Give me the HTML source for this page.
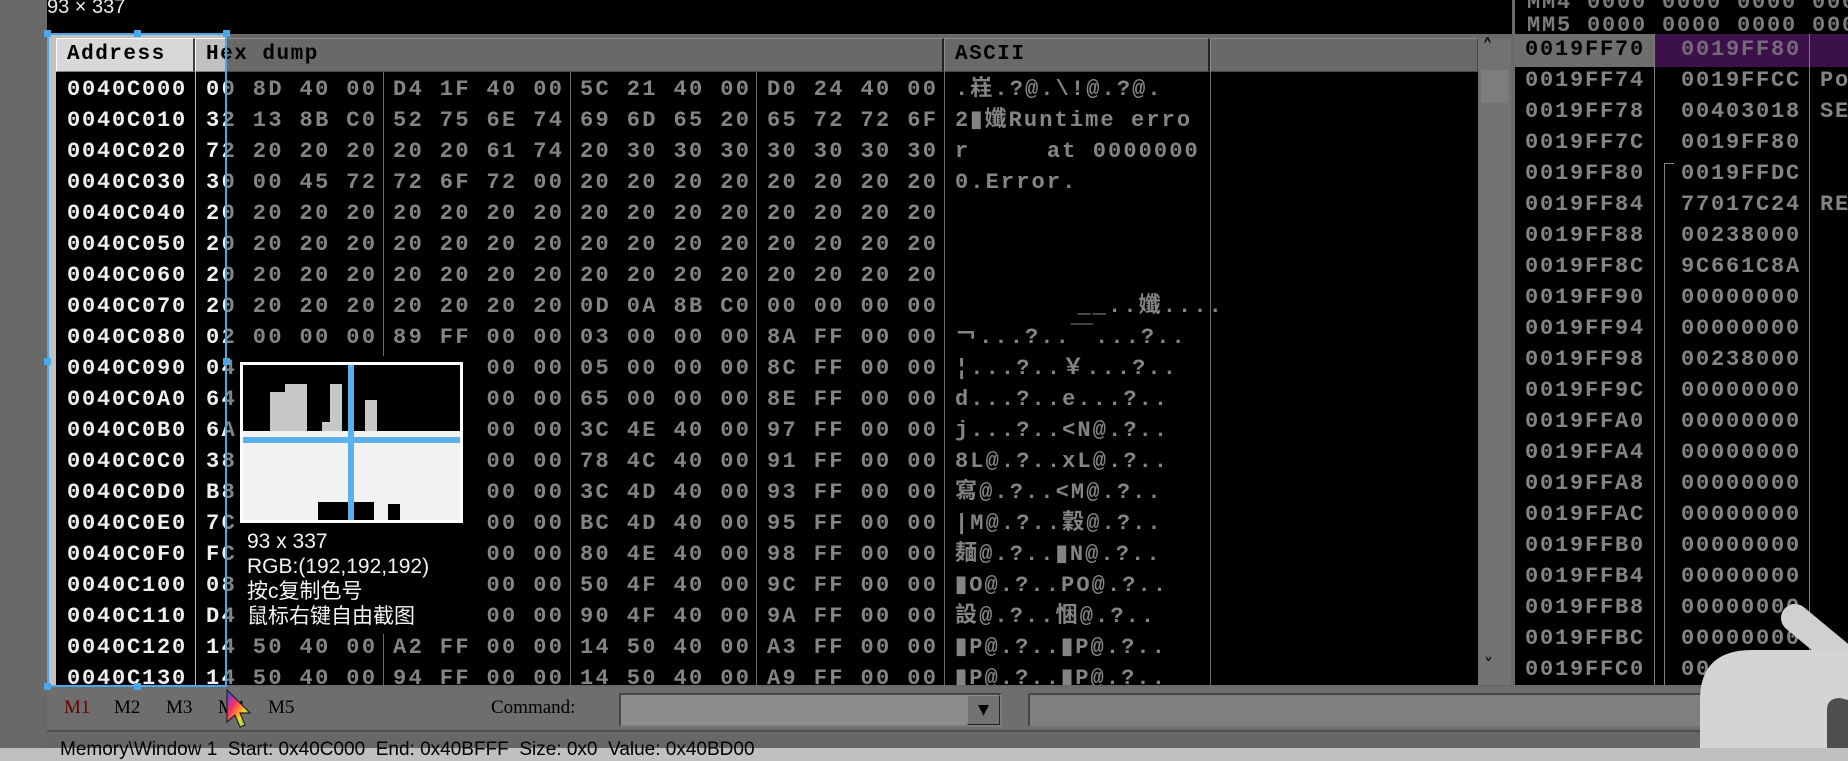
<!DOCTYPE html>
<html><head><meta charset="utf-8"><style>
*{margin:0;padding:0;box-sizing:border-box}
body{width:1848px;height:748px;overflow:hidden;position:relative;background:#c0c0c0;font-family:"Liberation Mono",monospace}
.a{position:absolute}
.t{position:absolute;font:bold 22px "Liberation Mono","Noto Sans CJK SC",monospace;line-height:31px;white-space:pre;color:#f0f0f0}
.ad{left:67px;letter-spacing:1.8px}
.hx{left:206px;letter-spacing:2.38px}
.as{left:955px;letter-spacing:2.1px}
.sa{left:1525px;letter-spacing:1.8px}
.sv{left:1681px;letter-spacing:1.8px}
.sc{left:1820px;letter-spacing:1.8px}
.vl{position:absolute;width:1px;background:#c0c0c0}
.hd{position:absolute;top:38px;height:34px;background:#c0c0c0;border-top:1px solid #fff;border-left:1px solid #fff;border-right:2px solid #404040;border-bottom:1px solid #808080;font:bold 21px "Liberation Mono",monospace;line-height:32px;color:#000;padding-left:10px;letter-spacing:1.5px}
.dim{position:absolute;background:rgba(0,0,0,0.45)}
.mb{position:absolute;top:697px;font:19px "Liberation Serif",serif;color:#000}
</style></head><body>
<div class="a" style="left:47px;top:0;width:1801px;height:34px;background:#000"></div>
<div class="a" style="left:1512px;top:0;width:3px;height:34px;background:#c0c0c0"></div>
<div class="t" style="left:1527px;top:-13px;color:#e0e0e0;letter-spacing:1.8px">MM4 0000 0000 0000 0000</div>
<div class="t" style="left:1527px;top:10px;color:#e0e0e0;letter-spacing:1.8px">MM5 0000 0000 0000 0000</div>

<div class="a" style="left:47px;top:34px;width:1465px;height:652px;background:#c0c0c0"></div>
<div class="a" style="left:56px;top:72px;width:1422px;height:613px;background:#000"></div>
<div class="hd" style="left:56px;width:139px;background:#d8d8d8">Address</div>
<div class="hd" style="left:195px;width:749px">Hex dump</div>
<div class="hd" style="left:944px;width:266px">ASCII</div>
<div class="hd" style="left:1210px;width:268px;border-right:1px solid #808080"></div>
<div class="vl" style="left:195px;top:72px;height:613px"></div>
<div class="vl" style="left:383px;top:72px;height:613px"></div>
<div class="vl" style="left:570px;top:72px;height:613px"></div>
<div class="vl" style="left:756px;top:72px;height:613px"></div>
<div class="vl" style="left:944px;top:72px;height:613px"></div>
<div class="vl" style="left:1210px;top:72px;height:613px"></div>
<div class="a" style="left:1478px;top:38px;width:33px;height:647px;background:#d0d0d0"></div>
<div class="a" style="left:1481px;top:70px;width:27px;height:33px;background:#e4e4e4"></div>
<div class="a" style="left:1482px;top:36px;font:bold 22px 'DejaVu Sans',sans-serif;color:#222">&#x2c4;</div>
<div class="a" style="left:1484px;top:655px;font:bold 18px 'DejaVu Sans',sans-serif;color:#222">&#x2c5;</div>

<div style="position:absolute;left:0;top:74px">
<div class="t ad" style="top:0">0040C000</div><div class="t hx" style="top:0">00 8D 40 00 D4 1F 40 00 5C 21 40 00 D0 24 40 00</div><div class="t as" style="top:0">.嵀.?@.\!@.?@.</div>
<div class="t ad" style="top:31px">0040C010</div><div class="t hx" style="top:31px">32 13 8B C0 52 75 6E 74 69 6D 65 20 65 72 72 6F</div><div class="t as" style="top:31px">2▮孅Runtime erro</div>
<div class="t ad" style="top:62px">0040C020</div><div class="t hx" style="top:62px">72 20 20 20 20 20 61 74 20 30 30 30 30 30 30 30</div><div class="t as" style="top:62px">r     at 0000000</div>
<div class="t ad" style="top:93px">0040C030</div><div class="t hx" style="top:93px">30 00 45 72 72 6F 72 00 20 20 20 20 20 20 20 20</div><div class="t as" style="top:93px">0.Error.</div>
<div class="t ad" style="top:124px">0040C040</div><div class="t hx" style="top:124px">20 20 20 20 20 20 20 20 20 20 20 20 20 20 20 20</div>
<div class="t ad" style="top:155px">0040C050</div><div class="t hx" style="top:155px">20 20 20 20 20 20 20 20 20 20 20 20 20 20 20 20</div>
<div class="t ad" style="top:186px">0040C060</div><div class="t hx" style="top:186px">20 20 20 20 20 20 20 20 20 20 20 20 20 20 20 20</div>
<div class="t ad" style="top:217px">0040C070</div><div class="t hx" style="top:217px">20 20 20 20 20 20 20 20 0D 0A 8B C0 00 00 00 00</div><div class="t as" style="top:217px">        __..孅....</div>
<div class="t ad" style="top:248px">0040C080</div><div class="t hx" style="top:248px">02 00 00 00 89 FF 00 00 03 00 00 00 8A FF 00 00</div><div class="t as" style="top:248px">￢...?..￣...?..</div>
<div class="t ad" style="top:279px">0040C090</div><div class="t hx" style="top:279px">04 00 00 00 8B FF 00 00 05 00 00 00 8C FF 00 00</div><div class="t as" style="top:279px">¦...?..￥...?..</div>
<div class="t ad" style="top:310px">0040C0A0</div><div class="t hx" style="top:310px">64 00 00 00 8D FF 00 00 65 00 00 00 8E FF 00 00</div><div class="t as" style="top:310px">d...?..e...?..</div>
<div class="t ad" style="top:341px">0040C0B0</div><div class="t hx" style="top:341px">6A 00 00 00 96 FF 00 00 3C 4E 40 00 97 FF 00 00</div><div class="t as" style="top:341px">j...?..&lt;N@.?..</div>
<div class="t ad" style="top:372px">0040C0C0</div><div class="t hx" style="top:372px">38 4C 40 00 90 FF 00 00 78 4C 40 00 91 FF 00 00</div><div class="t as" style="top:372px">8L@.?..xL@.?..</div>
<div class="t ad" style="top:403px">0040C0D0</div><div class="t hx" style="top:403px">B8 4C 40 00 92 FF 00 00 3C 4D 40 00 93 FF 00 00</div><div class="t as" style="top:403px">寫@.?..&lt;M@.?..</div>
<div class="t ad" style="top:434px">0040C0E0</div><div class="t hx" style="top:434px">7C 4D 40 00 94 FF 00 00 BC 4D 40 00 95 FF 00 00</div><div class="t as" style="top:434px">|M@.?..穀@.?..</div>
<div class="t ad" style="top:465px">0040C0F0</div><div class="t hx" style="top:465px">FC 4D 40 00 96 FF 00 00 80 4E 40 00 98 FF 00 00</div><div class="t as" style="top:465px">麺@.?..▮N@.?..</div>
<div class="t ad" style="top:496px">0040C100</div><div class="t hx" style="top:496px">08 4F 40 00 99 FF 00 00 50 4F 40 00 9C FF 00 00</div><div class="t as" style="top:496px">▮O@.?..PO@.?..</div>
<div class="t ad" style="top:527px">0040C110</div><div class="t hx" style="top:527px">D4 4F 40 00 9B FF 00 00 90 4F 40 00 9A FF 00 00</div><div class="t as" style="top:527px">設@.?..悃@.?..</div>
<div class="t ad" style="top:558px">0040C120</div><div class="t hx" style="top:558px">14 50 40 00 A2 FF 00 00 14 50 40 00 A3 FF 00 00</div><div class="t as" style="top:558px">▮P@.?..▮P@.?..</div>
<div class="t ad" style="top:589px">0040C130</div><div class="t hx" style="top:589px">14 50 40 00 94 FF 00 00 14 50 40 00 A9 FF 00 00</div><div class="t as" style="top:589px">▮P@.?..▮P@.?..</div>
</div>
<div class="a" style="left:47px;top:685px;width:1465px;height:3px;background:#c0c0c0"></div>

<div class="a" style="left:1512px;top:34px;width:336px;height:652px;background:#c0c0c0"></div>
<div class="a" style="left:1515px;top:34px;width:333px;height:651px;background:#000"></div>
<div class="a" style="left:1515px;top:34px;width:139px;height:33px;background:#c8c8c8"></div>
<div class="a" style="left:1655px;top:34px;width:193px;height:33px;background:#6e1e84"></div>
<div class="vl" style="left:1654px;top:34px;height:651px;background:#e0e0e0"></div>
<div class="vl" style="left:1809px;top:34px;height:651px;background:#e0e0e0"></div>
<div class="vl" style="left:1664px;top:163px;height:522px;background:#f0f0f0"></div>
<div class="a" style="left:1664px;top:163px;width:10px;height:1px;background:#f0f0f0"></div>
<div style="position:absolute;left:0;top:34px">
<div class="t sa" style="top:0;color:#000">0019FF70</div><div class="t sv" style="top:0;color:#d8c0e0">0019FF80</div>
<div class="t sa" style="top:31px">0019FF74</div><div class="t sv" style="top:31px">0019FFCC</div><div class="t sc" style="top:31px">Po</div>
<div class="t sa" style="top:62px">0019FF78</div><div class="t sv" style="top:62px">00403018</div><div class="t sc" style="top:62px">SE</div>
<div class="t sa" style="top:93px">0019FF7C</div><div class="t sv" style="top:93px">0019FF80</div>
<div class="t sa" style="top:124px">0019FF80</div><div class="t sv" style="top:124px">0019FFDC</div>
<div class="t sa" style="top:155px">0019FF84</div><div class="t sv" style="top:155px">77017C24</div><div class="t sc" style="top:155px">RE</div>
<div class="t sa" style="top:186px">0019FF88</div><div class="t sv" style="top:186px">00238000</div>
<div class="t sa" style="top:217px">0019FF8C</div><div class="t sv" style="top:217px">9C661C8A</div>
<div class="t sa" style="top:248px">0019FF90</div><div class="t sv" style="top:248px">00000000</div>
<div class="t sa" style="top:279px">0019FF94</div><div class="t sv" style="top:279px">00000000</div>
<div class="t sa" style="top:310px">0019FF98</div><div class="t sv" style="top:310px">00238000</div>
<div class="t sa" style="top:341px">0019FF9C</div><div class="t sv" style="top:341px">00000000</div>
<div class="t sa" style="top:372px">0019FFA0</div><div class="t sv" style="top:372px">00000000</div>
<div class="t sa" style="top:403px">0019FFA4</div><div class="t sv" style="top:403px">00000000</div>
<div class="t sa" style="top:434px">0019FFA8</div><div class="t sv" style="top:434px">00000000</div>
<div class="t sa" style="top:465px">0019FFAC</div><div class="t sv" style="top:465px">00000000</div>
<div class="t sa" style="top:496px">0019FFB0</div><div class="t sv" style="top:496px">00000000</div>
<div class="t sa" style="top:527px">0019FFB4</div><div class="t sv" style="top:527px">00000000</div>
<div class="t sa" style="top:558px">0019FFB8</div><div class="t sv" style="top:558px">00000000</div>
<div class="t sa" style="top:589px">0019FFBC</div><div class="t sv" style="top:589px">00000000</div>
<div class="t sa" style="top:620px">0019FFC0</div><div class="t sv" style="top:620px">00000000</div>
</div>
<div class="a" style="left:0;top:685px;width:1848px;height:2px;background:#c0c0c0"></div>

<div class="a" style="left:47px;top:687px;width:1801px;height:43px;background:#c8c8c8"></div>
<div class="mb" style="left:64px;color:#c00000">M1</div>
<div class="mb" style="left:114px">M2</div>
<div class="mb" style="left:166px">M3</div>
<div class="mb" style="left:218px">M4</div>
<div class="mb" style="left:268px">M5</div>
<div class="mb" style="left:491px">Command:</div>
<div class="a" style="left:619px;top:693px;width:383px;height:34px;background:#fff;border:2px solid #808080;border-right-color:#e0e0e0;border-bottom-color:#e0e0e0"></div>
<div class="a" style="left:967px;top:695px;width:33px;height:30px;background:#d0d0d0;border:1px solid #fff;border-right-color:#404040;border-bottom-color:#404040;font:14px 'DejaVu Sans',sans-serif;text-align:center;line-height:28px;color:#000">▼</div>
<div class="a" style="left:1028px;top:693px;width:820px;height:34px;background:#e8e8e8;border:2px solid #808080;border-right:none;border-bottom-color:#e0e0e0"></div>
<div class="a" style="left:47px;top:730px;width:1801px;height:18px;background:#bcbcbc;border-top:2px solid #909090"></div>
<div class="a" style="left:60px;top:739px;font:19px 'Liberation Sans',sans-serif;color:#000;white-space:pre">Memory\Window 1  Start: 0x40C000  End: 0x40BFFF  Size: 0x0  Value: 0x40BD00</div>

<div class="dim" style="left:0;top:0;width:1848px;height:33px"></div>
<div class="dim" style="left:0;top:33px;width:47px;height:715px"></div>
<div class="dim" style="left:226px;top:33px;width:1622px;height:715px"></div>
<div class="dim" style="left:47px;top:686px;width:179px;height:62px"></div>

<div class="a" style="left:47px;top:-4px;font:20px 'Liberation Sans',sans-serif;color:#e8e8e8">93 × 337</div>

<div class="a" style="left:47px;top:33px;width:180px;height:654px;border:2px solid #4aa8e8"></div>
<div class="a" style="left:44px;top:30px;width:7px;height:7px;background:#4aa8e8"></div>
<div class="a" style="left:134px;top:30px;width:7px;height:7px;background:#4aa8e8"></div>
<div class="a" style="left:223px;top:30px;width:7px;height:7px;background:#4aa8e8"></div>
<div class="a" style="left:44px;top:358px;width:7px;height:7px;background:#4aa8e8"></div>
<div class="a" style="left:223px;top:358px;width:7px;height:7px;background:#4aa8e8"></div>
<div class="a" style="left:44px;top:683px;width:7px;height:7px;background:#4aa8e8"></div>
<div class="a" style="left:134px;top:683px;width:7px;height:7px;background:#4aa8e8"></div>

<div class="a" style="left:236px;top:356px;width:240px;height:278px;background:#000"></div>
<svg class="a" style="left:240px;top:362px" width="223" height="161" viewBox="0 0 223 161">
<rect x="0" y="0" width="223" height="161" fill="#fff"/>
<rect x="3" y="3" width="217" height="66" fill="#000"/>
<rect x="3" y="69" width="217" height="89" fill="#f2f2f2"/>
<rect x="30" y="30" width="22" height="39" fill="#c8c8c8"/>
<rect x="45" y="22" width="22" height="47" fill="#c8c8c8"/>
<rect x="90" y="22" width="12" height="47" fill="#c8c8c8"/>
<rect x="82" y="60" width="12" height="9" fill="#c8c8c8"/>
<rect x="125" y="38" width="12" height="31" fill="#c8c8c8"/>
<rect x="3" y="75" width="217" height="6" fill="#5ab0e8"/>
<rect x="108" y="3" width="6" height="155" fill="#5ab0e8"/>
<rect x="78" y="140" width="30" height="18" fill="#000"/>
<rect x="114" y="140" width="20" height="18" fill="#000"/>
<rect x="148" y="142" width="12" height="16" fill="#000"/>
</svg>
<div class="a" style="left:247px;top:529px;font:21px/25px 'Liberation Sans','Noto Sans CJK SC',sans-serif;color:#f4f4f4;white-space:pre">93 x 337
RGB:(192,192,192)
按c复制色号
鼠标右键自由截图</div>

<svg class="a" style="left:224px;top:688px" width="30" height="44" viewBox="0 0 30 44">
<defs><linearGradient id="g" x1="0" y1="0" x2="1" y2="1"><stop offset="0" stop-color="#3050ff"/><stop offset=".35" stop-color="#ff3060"/><stop offset=".65" stop-color="#ffd020"/><stop offset="1" stop-color="#30e0a0"/></linearGradient></defs>
<path d="M3 2 L3 34 L11 27 L16 39 L21 37 L16 25 L26 25 Z" fill="url(#g)" stroke="#222" stroke-width="1.2"/>
</svg>

<svg class="a" style="left:1690px;top:600px" width="158" height="148" viewBox="0 0 158 148">
<path d="M105 18 L158 62" stroke="#d0d0d0" stroke-width="28" stroke-linecap="round"/>
<path d="M10 148 L10 100 Q10 50 62 50 L158 50 L158 148 Z" fill="#d4d4d4"/>
<path d="M137 148 L137 110 Q137 98 150 98 L158 100 L158 148 Z" fill="#4e4e4e"/>
</svg>
</body></html>
